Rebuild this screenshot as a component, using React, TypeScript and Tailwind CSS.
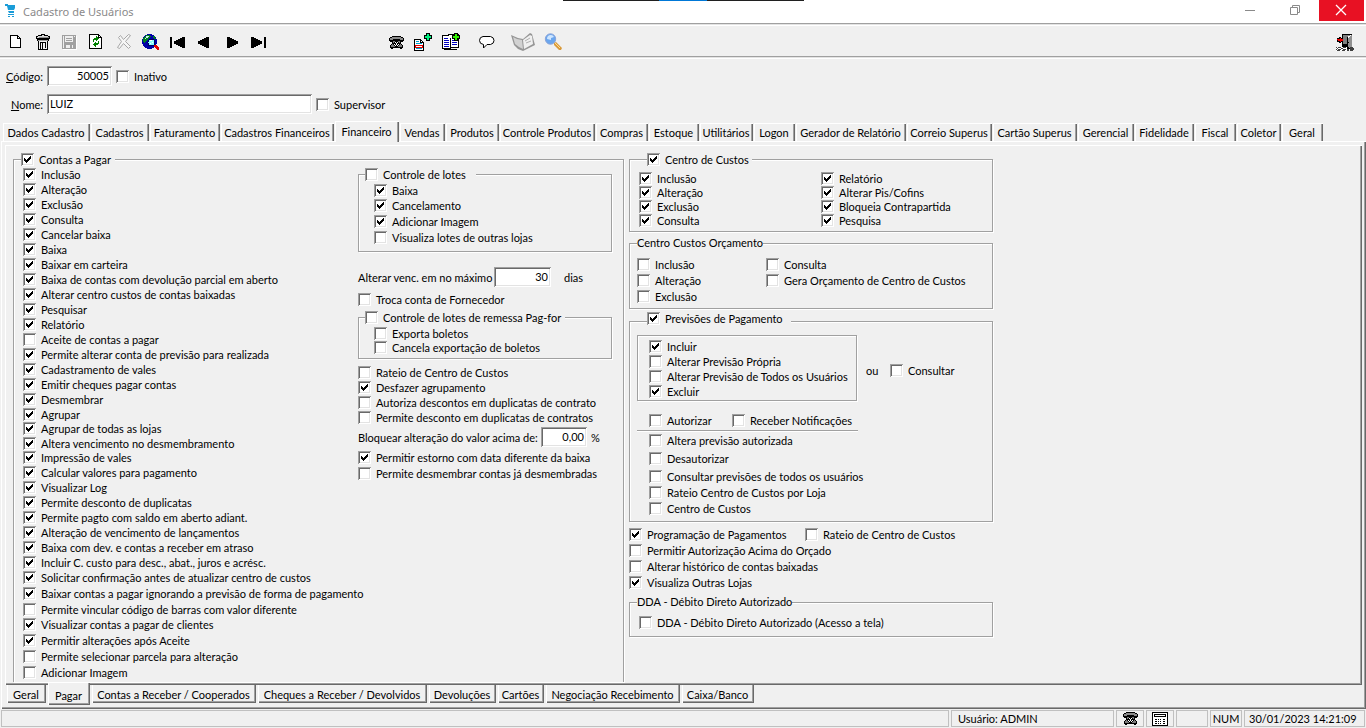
import React, { useState } from "react";

type Item = { label: string; on?: boolean; h?: string };

const BEVEL =
  "shadow-[inset_1px_1px_0_#a0a0a0,inset_-1px_-1px_0_#ffffff,inset_2px_2px_0_#696969,inset_-2px_-2px_0_#e3e3e3]";

function Check({ label, on = false, h = "h-[15px]", className = "" }: Item & { className?: string }) {
  return (
    <label className={`flex items-start gap-[5px] whitespace-nowrap ${h} ${className}`}>
      <span className="grid shrink-0">
        <input
          type="checkbox"
          defaultChecked={on}
          className={`peer col-start-1 row-start-1 h-[13px] w-[13px] appearance-none bg-white ${BEVEL}`}
        />
        <svg
          viewBox="0 0 13 13"
          shapeRendering="crispEdges"
          className="pointer-events-none invisible col-start-1 row-start-1 h-[13px] w-[13px] peer-checked:visible"
        >
          <path d="M3 5h1v3h-1zM4 6h1v3h-1zM5 7h1v3h-1zM6 6h1v3h-1zM7 5h1v3h-1zM8 4h1v3h-1zM9 3h1v3h-1z" />
        </svg>
      </span>
      <span className="leading-[14px]">{label}</span>
    </label>
  );
}

function Group({
  legend,
  className = "",
  children,
}: {
  legend: React.ReactNode;
  className?: string;
  children: React.ReactNode;
}) {
  return (
    <fieldset
      className={`min-w-0 border border-[#a0a0a0] shadow-[1px_1px_0_#ffffff,inset_1px_1px_0_#ffffff] ${className}`}
    >
      {legend}
      {children}
    </fieldset>
  );
}

function List({ items }: { items: Item[] }) {
  return (
    <div>
      {items.map((i) => (
        <Check key={i.label} {...i} />
      ))}
    </div>
  );
}

const contasPagar: Item[] = [
  { label: "Inclusão", on: true },
  { label: "Alteração", on: true },
  { label: "Exclusão", on: true },
  { label: "Consulta", on: true },
  { label: "Cancelar baixa", on: true },
  { label: "Baixa", on: true },
  { label: "Baixar em carteira", on: true },
  { label: "Baixa de contas com devolução parcial em aberto", on: true },
  { label: "Alterar centro custos de contas baixadas", on: true },
  { label: "Pesquisar", on: true },
  { label: "Relatório", on: true },
  { label: "Aceite de contas a pagar" },
  { label: "Permite alterar conta de previsão para realizada", on: true },
  { label: "Cadastramento de vales", on: true },
  { label: "Emitir cheques pagar contas", on: true },
  { label: "Desmembrar", on: true },
  { label: "Agrupar", on: true, h: "h-[14px]" },
  { label: "Agrupar de todas as lojas", on: true },
  { label: "Altera vencimento no desmembramento", on: true, h: "h-[14px]" },
  { label: "Impressão de vales", on: true },
  { label: "Calcular valores para pagamento", on: true },
  { label: "Visualizar Log", on: true },
  { label: "Permite desconto de duplicatas", on: true },
  { label: "Permite pagto com saldo em aberto adiant.", on: true },
  { label: "Alteração de vencimento de lançamentos", on: true },
  { label: "Baixa com dev. e contas a receber em atraso", on: true },
  { label: "Incluir C. custo para desc., abat., juros e acrésc.", on: true },
  { label: "Solicitar confirmação antes de atualizar centro de custos", on: true, h: "h-4" },
  { label: "Baixar contas a pagar ignorando a previsão de forma de pagamento", on: true, h: "h-4" },
  { label: "Permite vincular código de barras com valor diferente" },
  { label: "Visualizar contas a pagar de clientes", on: true, h: "h-4" },
  { label: "Permitir alterações após Aceite", on: true, h: "h-4" },
  { label: "Permite selecionar parcela para alteração", h: "h-4" },
  { label: "Adicionar Imagem" },
];

const topTabs: [string, string][] = [
  ["Dados Cadastro", "w-[87px]"],
  ["Cadastros", "w-[58px]"],
  ["Faturamento", "w-[70px]"],
  ["Cadastros Financeiros", "w-[113px]"],
  ["Financeiro", "w-[64px]"],
  ["Vendas", "w-[45px]"],
  ["Produtos", "w-[53px]"],
  ["Controle Produtos", "w-[95px]"],
  ["Compras", "w-[52px]"],
  ["Estoque", "w-[50px]"],
  ["Utilitários", "w-[53px]"],
  ["Logon", "w-[41px]"],
  ["Gerador de Relatório", "w-[110px]"],
  ["Correio Superus", "w-[85px]"],
  ["Cartão Superus", "w-[84px]"],
  ["Gerencial", "w-[56px]"],
  ["Fidelidade", "w-[59px]"],
  ["Fiscal", "w-[41px]"],
  ["Coletor", "w-[44px]"],
  ["Geral", "w-[41px]"],
];

const bottomTabs: [string, string][] = [
  ["Geral", "w-[39px]"],
  ["Pagar", "w-[42px]"],
  ["Contas a Receber / Cooperados", "w-[164px]"],
  ["Cheques a Receber / Devolvidos", "w-[169px]"],
  ["Devoluções", "w-[67px]"],
  ["Cartões", "w-[46px]"],
  ["Negociação Recebimento", "w-[134px]"],
  ["Caixa/Banco", "w-[72px]"],
];

function Phone() {
  return (
    <>
      <path d="M10 6h9v1h2v1h1v3h-1v1h-2v1l2 3v2h-1v1h-2v-1h-7v1H9v-1H8v-2l2-3v-1H8v-1H7V8h1V7h2z" fill="#000" />
      <path d="M10 7h9v1h2v2h-3V9h-7v1H8V8h2z" fill="#8a8a8a" />
      <path d="M11 11h7v2l2 3v1H9v-1l2-3z" fill="#7c7c7c" />
      <path d="M13 11h3v1h1v1h1v2h-1v1h-1v1h-3v-1h-1v-1h-1v-2h1v-1h1z" fill="#000" />
      <path d="M13 12h1v1h-1zM15 12h1v1h-1zM12 14h1v1h-1zM16 14h1v1h-1zM14 13h1v2h-1zM13 16h1v-1h-1zM15 16h1v-1h-1z" fill="#fff" />
    </>
  );
}

const icons: Record<string, React.ReactNode> = {
  Novo: (
    <>
      <path d="M8 5h8v1h1v1h1v1h1v10H8z" fill="#000" />
      <path d="M9 6h6v3h3v8H9zM16 7h1v1h-1z" fill="#fff" />
    </>
  ),
  Excluir: (
    <>
      <path d="M12 4h4v1h3v1h2v3H7V6h2V5h3z" fill="#000" />
      <path d="M13 5h2v1h-2zM9 6h10v1H9zM8 7h2v1H8z" fill="#d8d8d8" />
      <path d="M10 7h10v1H10z" fill="#909090" />
      <path d="M8 9h12v2h-1v9H9v-9H8z" fill="#000" />
      <path d="M9 10h10v1H9z" fill="#a0a0a0" />
      <path d="M10 11h8v8h-8z" fill="#f0f0f0" />
      <path d="M11 12h2v1h-1v6h-1zM13 12h2v1h-1v6h-1zM15 12h2v6h-1v-5h-1z" fill="#000" />
    </>
  ),
  Salvar: (
    <>
      <path d="M7 6h14v14H7z" fill="#fff" />
      <path d="M6 5h14v14H6z" fill="#a0a0a0" />
      <path d="M9 6h8v6H9zM18 6h1v1h-1zM10 15h7v3h-7zM7 6h1v12H7z" fill="#efefef" />
      <path d="M10 8h6v1h-6zM10 10h6v1h-6zM14 15h2v3h-2z" fill="#a0a0a0" />
    </>
  ),
  Atualizar: (
    <>
      <path d="M6 4h10v1h1v1h1v1h1v12H6z" fill="#000" />
      <path d="M7 5h8v3h3v10H7zM16 6h1v1h-1z" fill="#fff" />
      <path d="M10 9h1V8h2V6h1v1h1v1h1v1h-1v1h-1v1h-1v-1h-2v2h-1zM15 11h1v3h-1v1h-2v2h-1v-1h-1v-1h-1v-1h1v-1h1v-1h1v1h2z" fill="#008000" />
    </>
  ),
  Cancelar: (
    <g shapeRendering="auto">
      <path
        d="M8.500 7.500L10.500 5.500L13.500 9.500L18.500 4.500L20.500 5.500L15.500 11.500L20.500 16.500L18.500 18.500L13.500 13.500L9.500 18.500L7.500 17.500L11.500 11.500Z"
        fill="#f6f6f6"
        stroke="#a8a8a8"
      />
    </g>
  ),
  Consultar: (
    <>
      <circle cx="12.5" cy="11.5" r="7.5" fill="#0000a8" />
      <path d="M9 5h4l1 2-3 2-2 3-2 1-1-3 1-3z" fill="#008020" />
      <path d="M9 6h3v1h-1v1H9zM8 8h1v1H8z" fill="#c8f0f0" />
      <path d="M16 6h2l1 3h-2z" fill="#008020" />
      <circle cx="14.5" cy="12.500" r="3.500" fill="#8ff" stroke="#000060" />
      <path d="M13 10h2v1h-2zM13 13h1v1h-1zM15 12h1v1h-1z" fill="#fff" />
      <path d="M17 15h2l3 3v2h-2l-3-3z" fill="#e00000" />
    </>
  ),
  Primeiro: <path d="M6 7h2v11H6zM21 7v11h-2l-9-4.500v-2L19 7z" fill="#000" />,
  Anterior: <path d="M18 7v11h-2l-9-4.500v-2L16 7z" fill="#000" />,
  Próximo: <path d="M9 7v11h2l9-4.500v-2L11 7z" fill="#000" />,
  Último: <path d="M19 7h2v11h-2zM6 7v11h2l9-4.500v-2L8 7z" fill="#000" />,
  Telefone: <Phone />,
  "Nova ficha": (
    <>
      <path d="M5 9h7v1h1v1h1v1h1v9H5z" fill="#000" />
      <path d="M6 10h5v3h3v7H6zM12 11h1v1h-1z" fill="#fff" />
      <path d="M7 11h3v1H7zM7 13h6v1H7zM7 18h6v1H7z" fill="#00a0d0" />
      <path d="M6 15h8v1H6zM6 17h8v1H6zM6 16h1v1H6zM13 16h1v1h-1z" fill="#e00000" />
      <path d="M17 3h4v2h2v4h-2v2h-4V9h-2V5h2z" fill="#000" />
      <path d="M18 4h2v2h2v2h-2v2h-2V8h-2V6h2z" fill="#00f080" />
    </>
  ),
  "Copiar ficha": (
    <>
      <path d="M6 5h8v1h1v13H6zM12 4h11v14H12z" fill="#000" />
      <path d="M7 6h7v12H7zM15 6h7v11h-7zM13 5h4v3h-4z" fill="#fff" />
      <path d="M8 8h4v1H8zM8 10h5v1H8zM8 12h5v1H8zM8 14h5v1H8zM8 16h5v1H8zM16 10h5v1h-5zM16 12h5v1h-5zM16 14h5v1h-5z" fill="#0000c0" />
      <path d="M8 19h13v1H8z" fill="#000" />
      <path d="M18 3h4v2h2v4h-2v2h-4V9h-2V5h2z" fill="#000" />
      <path d="M19 4h2v2h2v2h-2v2h-2V8h-2V6h2z" fill="#30f000" />
    </>
  ),
  Mensagem: (
    <g shapeRendering="auto">
      <path
        d="M10 6.500h7.500q3.500.8 3.500 4t-3.500 4h-3.500L10.500 18v-3.500q-4-.5-4-4t3.500-4z"
        fill="#fff"
        stroke="#000"
      />
    </g>
  ),
  Manual: (
    <g shapeRendering="auto">
      <path d="M1 5l7 3 5 1 7-6 2 1 3 11-6 3-6 3-5-2-4-4z" fill="#969696" />
      <path d="M3 7l4 2 5 1 1 9-4-2-4-3z" fill="#d2d2d2" />
      <path d="M13 10l7-5 2 1 1 8-9 5z" fill="#f0f0f0" />
      <path d="M15 11l5-3M16 13l5-2" stroke="#b0b0b0" fill="none" />
    </g>
  ),
  Pesquisar: (
    <g shapeRendering="auto">
      <path d="M13 13l2-1 6 6-1 2h-2l-5-5z" fill="#d99a3a" />
      <path d="M14 13l5 5" stroke="#ffdc90" />
      <circle cx="9.500" cy="9" r="5.200" fill="#6aa6ee" stroke="#8ba4d8" />
      <path d="M6 9q0-4 4-4 2 0 3 2l-3 1v2z" fill="#cfe6ff" />
    </g>
  ),
  Sair: (
    <>
      <path d="M9 4h10v15H9z" fill="#000" />
      <path d="M10 5h8v9h-8z" fill="#808080" />
      <path d="M14 7l4-2v14l-4-3z" fill="#fff" />
      <path d="M15 8l4-3v15h-1l-3-3z" fill="#909090" />
      <path d="M15 12h1v1h-1zM14 7h1v10h-1z" fill="#000" />
      <path d="M4 8h2V7h2v1h2v4H8v1H6v-1H4z" fill="#000" />
      <path d="M4 9h3V8h1v1h2v2H8v1H7v-1H5v-1H4z" fill="#f00000" />
      <path d="M3 17h11v4H3z" fill="#fff" />
      <path
        d="M3 17h1v1h-1zM5 17h3v1H5zM10 17h3v1h-3zM4 18h1v1h-1zM8 18h2v1H8zM3 19h1v1H3zM5 19h3v1H5zM10 19h3v1h-3zM4 20h3v1H4zM9 20h3v1H9zM14 19h2v2h-2zM17 17h3v1h1v2h-1v1h-3z"
        fill="#404040"
      />
    </>
  ),
};

function Tool({ name, className = "" }: { name: string; className?: string }) {
  return (
    <button type="button" aria-label={name} className={`h-6 w-[27px] shrink-0 ${className}`}>
      <svg viewBox="0 0 27 24" shapeRendering="crispEdges" className="block h-6 w-[27px]">
        {icons[name]}
      </svg>
    </button>
  );
}

function Pane({ className = "", children }: { className?: string; children?: React.ReactNode }) {
  return (
    <div className={`flex h-[17px] items-center whitespace-nowrap border border-[#c0c0c0] leading-[13px] ${className}`}>
      {children}
    </div>
  );
}

const FIELD = `h-5 bg-white px-[3px] pb-[2px] outline-none ${BEVEL}`;

export default function App() {
  const [tab, setTab] = useState("Financeiro");
  const [page, setPage] = useState("Pagar");

  return (
    <div className="flex min-h-screen flex-col bg-[#f0f0f0] font-[Lato,'Liberation_Sans',sans-serif] text-[11px] leading-[13px] text-black">
      <div className="absolute left-[563px] top-0 flex h-px w-[241px] bg-[#202020]">
        <span className="ml-24 w-12 bg-[#0078d7]" />
      </div>

      <header className="flex h-[23px] items-start bg-white">
        <svg viewBox="0 0 12 14" className="ml-1 mt-1 h-[14px] w-3" fill="#1a9cd8">
          <path d="M1 0h3v1h7v3l-1 2H4L3 2H1zM4 7h6v2H5zM4 10h6v1H4zM4 12h2v1H4zM8 12h2v1H8z" />
        </svg>
        <h1 className="ml-[7px] mt-1 flex-1 font-['Noto_Sans','Open_Sans',sans-serif] text-[11px] leading-4 text-[#8a8a8a]">
          Cadastro de Usuários
        </h1>
        <button type="button" aria-label="Minimizar" className="h-[21px] w-[45px]">
          <svg viewBox="0 0 45 21" className="h-[21px] w-[45px]" stroke="#8a8a8a">
            <path d="M16 10.5h10" />
          </svg>
        </button>
        <button type="button" aria-label="Restaurar" className="h-[21px] w-[45px]">
          <svg viewBox="0 0 45 21" className="h-[21px] w-[45px]" stroke="#8a8a8a" fill="none">
            <path d="M16.500 7.500h7v7h-7zM18.500 7.500v-2h7v7h-2" />
          </svg>
        </button>
        <button type="button" aria-label="Fechar" className="mr-[2px] h-[21px] w-[45px] bg-[#e81123]">
          <svg viewBox="0 0 45 21" className="h-[21px] w-[45px]" stroke="#ffffff" strokeWidth="1.3">
            <path d="M17 5l10 10M27 5L17 15" />
          </svg>
        </button>
      </header>

      <nav className="flex h-9 items-center border-b border-t border-[#a0a0a0] border-b-white pl-[2px] pt-[2px] shadow-[inset_0_1px_0_#e3e3e3,inset_0_2px_0_#ffffff,inset_0_-1px_0_#e3e3e3,inset_0_-2px_0_#a0a0a0]">
        <Tool name="Novo" />
        <Tool name="Excluir" />
        <Tool name="Salvar" />
        <Tool name="Atualizar" />
        <Tool name="Cancelar" />
        <Tool name="Consultar" />
        <Tool name="Primeiro" />
        <Tool name="Anterior" />
        <Tool name="Próximo" />
        <Tool name="Último" />
        <Tool name="Telefone" className="ml-[110px]" />
        <Tool name="Nova ficha" />
        <Tool name="Copiar ficha" />
        <Tool name="Mensagem" className="ml-[10px]" />
        <Tool name="Manual" className="ml-[10px]" />
        <Tool name="Pesquisar" className="ml-1" />
        <Tool name="Sair" className="ml-auto mr-[6px]" />
      </nav>

      <div className="mt-[7px] flex flex-col gap-2">
        <div className="flex h-5 items-center">
          <label htmlFor="codigo" className="mr-1 w-[43px] text-right">
            <u>C</u>ódigo:
          </label>
          <input id="codigo" defaultValue="50005" className={`w-[65px] text-right ${FIELD}`} />
          <Check label="Inativo" h="h-[13px]" className="ml-1" />
        </div>
        <div className="flex h-5 items-center">
          <label htmlFor="nome" className="mr-1 w-[43px] text-right">
            <u>N</u>ome:
          </label>
          <input id="nome" defaultValue="LUIZ" className={`w-[265px] ${FIELD}`} />
          <Check label="Supervisor" h="h-[13px]" className="ml-1" />
        </div>
      </div>

      <div role="tablist" className="mt-[7px] flex h-5 items-end gap-px pl-[3px]">
        {topTabs.map(([name, w]) => (
          <button
            key={name}
            type="button"
            role="tab"
            aria-selected={tab === name}
            onClick={() => setTab(name)}
            className={`shrink-0 whitespace-nowrap border-l border-t border-white bg-[#f0f0f0] pr-[2px] text-center shadow-[inset_-1px_0_0_#696969,inset_-2px_0_0_#a0a0a0] ${w} ${
              tab === name ? "relative z-10 -mb-px h-[21px] pb-[2px]" : "h-[18px]"
            }`}
          >
            {name}
          </button>
        ))}
      </div>

      <main className="ml-px flex flex-1 flex-col border-l border-t border-white pl-[3px] pr-1 pt-[3px] shadow-[inset_-1px_-1px_0_#696969,inset_-2px_-2px_0_#a0a0a0]">
        <section className="flex flex-1 gap-[5px] border-l border-t border-white pb-[3px] pl-[7px] pt-[7px] shadow-[inset_-1px_-1px_0_#696969,inset_-2px_-2px_0_#a0a0a0]">
          <Group
            className="w-[611px] shrink-0 border-b-0"
            legend={
              <legend className="ml-[7px] bg-[#f0f0f0] pr-1">
                <Check label="Contas a Pagar" on h="h-[13px]" />
              </legend>
            }
          >
            <div className="flex pl-[9px]">
              <div className="w-[335px] shrink-0 pt-[2px]">
                <List items={contasPagar} />
              </div>
              <div className="w-[254px] pt-[2px]">
                <Group
                  className="pb-1"
                  legend={
                    <legend className="ml-[6px] bg-[#f0f0f0] pr-[10px]">
                      <Check label="Controle de lotes" h="h-[13px]" />
                    </legend>
                  }
                >
                  <div className="pl-[15px] pt-[3px]">
                    <List
                      items={[
                        { label: "Baixa", on: true },
                        { label: "Cancelamento", on: true, h: "h-4" },
                        { label: "Adicionar Imagem", on: true, h: "h-4" },
                        { label: "Visualiza lotes de outras lojas", h: "h-4" },
                      ]}
                    />
                  </div>
                </Group>
                <div className="mt-[15px] flex h-5 items-center whitespace-nowrap">
                  <label htmlFor="dias" className="w-[136px]">
                    Alterar venc. em no máximo
                  </label>
                  <input id="dias" defaultValue="30" className={`w-[57px] text-right ${FIELD}`} />
                  <span className="ml-[13px]">dias</span>
                </div>
                <Check label="Troca conta de Fornecedor" className="mt-[6px]" />
                <Group
                  className="mt-[3px] pb-[3px]"
                  legend={
                    <legend className="ml-[6px] bg-[#f0f0f0] pr-1">
                      <Check label="Controle de lotes de remessa Pag-for" h="h-[13px]" />
                    </legend>
                  }
                >
                  <div className="pl-[15px] pt-[3px]">
                    <List
                      items={[
                        { label: "Exporta boletos", h: "h-[14px]" },
                        { label: "Cancela exportação de boletos", h: "h-[14px]" },
                      ]}
                    />
                  </div>
                </Group>
                <div className="mt-[7px]">
                  <List
                    items={[
                      { label: "Rateio de Centro de Custos" },
                      { label: "Desfazer agrupamento", on: true },
                      { label: "Autoriza descontos em duplicatas de contrato" },
                      { label: "Permite desconto em duplicatas de contratos" },
                    ]}
                  />
                </div>
                <div className="mt-px flex h-5 items-center whitespace-nowrap">
                  <label htmlFor="limite" className="w-[183px]">
                    Bloquear alteração do valor acima de:
                  </label>
                  <input id="limite" defaultValue="0,00" className={`w-[46px] text-right ${FIELD}`} />
                  <span className="ml-1">%</span>
                </div>
                <div className="mt-1">
                  <List
                    items={[
                      { label: "Permitir estorno com data diferente da baixa", on: true, h: "h-4" },
                      { label: "Permite desmembrar contas já desmembradas", h: "h-4" },
                    ]}
                  />
                </div>
              </div>
            </div>
          </Group>

          <div className="w-[364px] shrink-0">
            <Group
              className="pb-[3px]"
              legend={
                <legend className="ml-[17px] bg-[#f0f0f0] pr-[3px]">
                  <Check label="Centro de Custos" on h="h-[13px]" />
                </legend>
              }
            >
              <div className="grid grid-cols-[182px_1fr] pl-[9px] pt-[6px]">
                <List
                  items={[
                    { label: "Inclusão", on: true, h: "h-[14px]" },
                    { label: "Alteração", on: true, h: "h-[14px]" },
                    { label: "Exclusão", on: true, h: "h-[14px]" },
                    { label: "Consulta", on: true, h: "h-[14px]" },
                  ]}
                />
                <List
                  items={[
                    { label: "Relatório", on: true, h: "h-[14px]" },
                    { label: "Alterar Pis/Cofins", on: true, h: "h-[14px]" },
                    { label: "Bloqueia Contrapartida", on: true, h: "h-[14px]" },
                    { label: "Pesquisa", on: true, h: "h-[14px]" },
                  ]}
                />
              </div>
            </Group>

            <Group
              className="mt-1 pb-[2px]"
              legend={<legend className="ml-[7px] bg-[#f0f0f0] leading-[14px]">Centro Custos Orçamento</legend>}
            >
              <div className="grid grid-cols-[129px_1fr] pl-[7px] pt-2">
                <List
                  items={[
                    { label: "Inclusão", h: "h-4" },
                    { label: "Alteração", h: "h-4" },
                    { label: "Exclusão", h: "h-4" },
                  ]}
                />
                <List
                  items={[
                    { label: "Consulta", h: "h-4" },
                    { label: "Gera Orçamento de Centro de Custos", h: "h-4" },
                  ]}
                />
              </div>
            </Group>

            <Group
              className="mt-[3px] pb-[3px]"
              legend={
                <legend className="ml-[17px] bg-[#f0f0f0] pr-2">
                  <Check label="Previsões de Pagamento" on h="h-[19px]" />
                </legend>
              }
            >
              <div className="pl-[7px] pt-1">
                <div className="flex">
                  <div className="w-[220px] border border-[#a0a0a0] pl-[11px] pt-1 shadow-[1px_1px_0_#ffffff,inset_1px_1px_0_#ffffff]">
                    <List
                      items={[
                        { label: "Incluir", on: true },
                        { label: "Alterar Previsão Própria" },
                        { label: "Alterar Previsão de Todos os Usuários" },
                        { label: "Excluir", on: true },
                      ]}
                    />
                  </div>
                  <div className="ml-[9px] mt-[29px] flex">
                    <span className="w-6 leading-[14px]">ou</span>
                    <Check label="Consultar" />
                  </div>
                </div>
                <div className="mt-[13px] flex pl-3">
                  <Check label="Autorizar" className="w-[83px]" />
                  <Check label="Receber Notificações" />
                </div>
                <hr className="mt-px w-[221px] border-t border-[#a0a0a0] shadow-[0_1px_0_#ffffff]" />
                <div className="pl-3 pt-[3px]">
                  <List
                    items={[
                      { label: "Altera previsão autorizada", h: "h-[18px]" },
                      { label: "Desautorizar", h: "h-[18px]" },
                      { label: "Consultar previsões de todos os usuários", h: "h-4" },
                      { label: "Rateio Centro de Custos por Loja", h: "h-4" },
                      { label: "Centro de Custos", h: "h-4" },
                    ]}
                  />
                </div>
              </div>
            </Group>

            <div className="mt-[6px] grid grid-cols-[176px_1fr]">
              <List
                items={[
                  { label: "Programação de Pagamentos", on: true, h: "h-4" },
                  { label: "Permitir Autorização Acima do Orçado", h: "h-4" },
                  { label: "Alterar histórico de contas baixadas", h: "h-4" },
                  { label: "Visualiza Outras Lojas", on: true, h: "h-4" },
                ]}
              />
              <Check label="Rateio de Centro de Custos" />
            </div>

            <Group
              className="mt-[3px] pb-[5px]"
              legend={<legend className="ml-[7px] bg-[#f0f0f0] leading-[14px]">DDA - Débito Direto Autorizado</legend>}
            >
              <div className="pl-[9px] pt-[7px]">
                <Check label="DDA - Débito Direto Autorizado (Acesso a tela)" />
              </div>
            </Group>
          </div>
        </section>

        <div role="tablist" className="flex h-6 items-start gap-[2px] pl-[2px]">
          {bottomTabs.map(([name, w]) => (
            <button
              key={name}
              type="button"
              role="tab"
              aria-selected={page === name}
              onClick={() => setPage(name)}
              className={`shrink-0 whitespace-nowrap border-l border-white bg-[#f0f0f0] pr-[2px] text-center shadow-[inset_-1px_-1px_0_#696969,inset_-2px_-2px_0_#a0a0a0] ${w} ${
                page === name ? "relative z-10 -mt-[2px] h-[22px] pt-[2px]" : "h-[18px]"
              }`}
            >
              {name}
            </button>
          ))}
        </div>
      </main>

      <footer className="flex h-[19px] items-start gap-[2px] pl-px pt-px">
        <Pane className="flex-1" />
        <Pane className="w-[163px] pl-[6px]">Usuário: ADMIN</Pane>
        <Pane className="w-7 justify-center">
          <svg viewBox="6 5 17 15" shapeRendering="crispEdges" className="h-[15px] w-[17px] shrink-0" aria-label="Telefone">
            <Phone />
          </svg>
        </Pane>
        <Pane className="w-7 justify-center">
          <svg viewBox="0 0 16 14" shapeRendering="crispEdges" className="h-[14px] w-4" aria-label="Calculadora">
            <path d="M0 0h16v14H0z" />
            <path d="M1 1h14v12H1z" fill="#fff" />
            <path d="M2 2h12v3H2z" />
            <path d="M3 3h10v1H3z" fill="#fff" />
            <path d="M3 7h2v1H3zM6 7h1v1H6zM8 7h1v1H8zM11 7h2v1h-2zM3 9h2v1H3zM6 9h1v1H6zM8 9h1v1H8zM11 9h2v1h-2zM3 11h2v1H3zM6 11h1v1H6zM8 11h1v1H8zM11 11h2v1h-2z" />
          </svg>
        </Pane>
        <Pane className="w-8" />
        <Pane className="w-8 justify-center">NUM</Pane>
        <Pane className="mr-px w-[121px] pl-1">30/01/2023 14:21:09</Pane>
      </footer>
    </div>
  );
}
